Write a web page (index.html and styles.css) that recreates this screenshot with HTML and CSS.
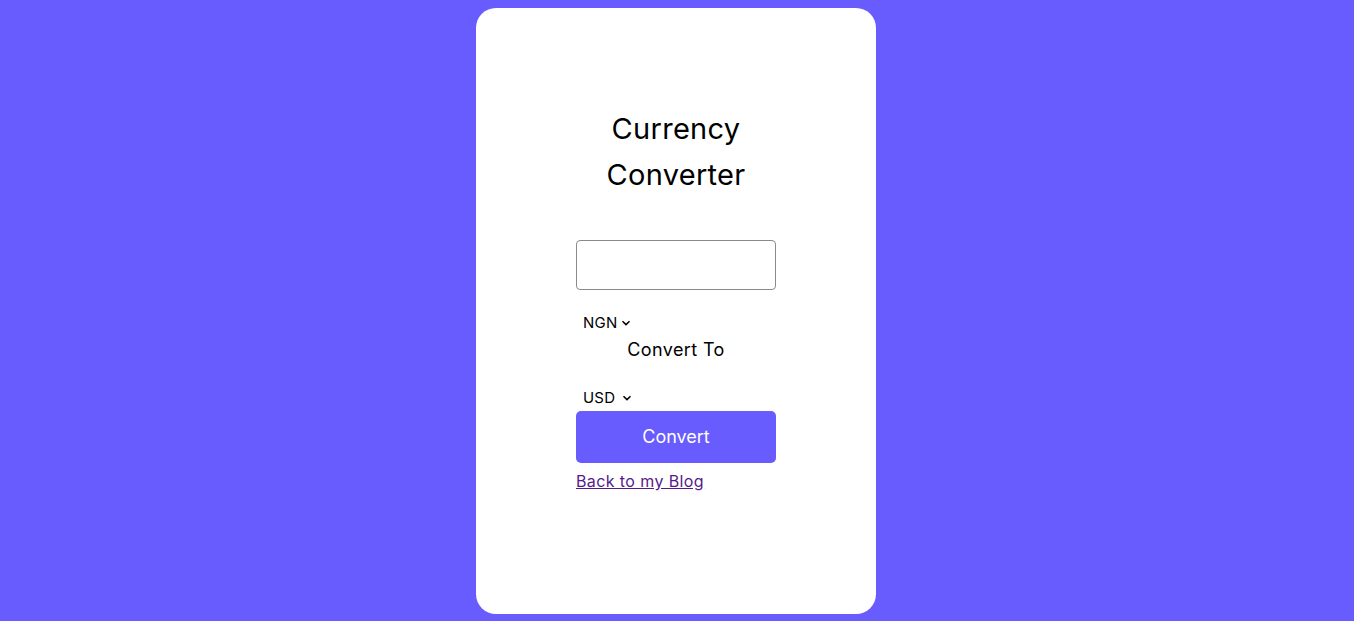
FILE: index.html
```html
<!DOCTYPE html>
<html lang="en">
<head>
<meta charset="utf-8">
<title>Currency Converter</title>
<link rel="stylesheet" href="styles.css">
</head>
<body>
<main class="card">
  <div class="content">
    <h1 class="title">Currency Converter</h1>
    <input class="amount" type="text" aria-label="Amount">
    <div class="select-wrap from">
      <span class="select-text">NGN</span>
      <svg class="chev" width="10" height="6" viewBox="0 0 10 6"><path d="M1.5 1.2 L5 4.6 L8.5 1.2" fill="none" stroke="#000" stroke-width="1.5"/></svg>
    </div>
    <p class="convert-to">Convert To</p>
    <div class="select-wrap to">
      <span class="select-text">USD</span>
      <svg class="chev" width="10" height="6" viewBox="0 0 10 6"><path d="M1.5 1.2 L5 4.6 L8.5 1.2" fill="none" stroke="#000" stroke-width="1.5"/></svg>
    </div>
    <button class="btn" type="button">Convert</button>
    <a class="link" href="#">Back to my Blog</a>
  </div>
</main>
</body>
</html>
```
FILE: styles.css
```css
html, body {
  margin: 0;
  padding: 0;
}
body {
  background: #695cfe;
  font-family: "Inter", "Noto Sans", sans-serif;
  color: #000;
  padding-top: 8px;
  min-height: 621px;
  box-sizing: border-box;
}
.card {
  width: 400px;
  height: 606px;
  margin: 0 auto;
  background: #fff;
  border-radius: 20px;
  display: flex;
  justify-content: center;
  transform: translateX(-1px);
}
.content {
  width: 200px;
  padding-top: 98px;
  display: flex;
  flex-direction: column;
}
.title {
  margin: 0;
  font-size: 29px;
  font-weight: 400;
  line-height: 46px;
  text-align: center;
  letter-spacing: 0.3px;
}
.amount {
  margin: 42px 0 0;
  width: 200px;
  height: 50px;
  box-sizing: border-box;
  border: 1px solid #8a8a8a;
  border-radius: 4px;
  font: inherit;
  padding: 0 10px;
  outline: none;
}
.select-wrap {
  display: flex;
  align-items: center;
  gap: 4px;
  padding-left: 7px;
  height: 20px;
  font-size: 15px;
  letter-spacing: 0.2px;
}
.select-wrap.from {
  margin-top: 22px;
}
.select-wrap.to {
  margin-top: 24px;
}
.select-wrap.to .chev {
  margin-left: 3px;
}
.chev {
  margin-top: 1px;
}
.convert-to {
  margin: 4px 0 0;
  font-size: 18px;
  line-height: 27px;
  text-align: center;
  letter-spacing: 0.4px;
}
.btn {
  margin-top: 4px;
  width: 200px;
  height: 52px;
  border: none;
  border-radius: 5px;
  background: #695cfe;
  color: #fff;
  font: inherit;
  font-size: 18px;
  padding: 0 0 2px;
  cursor: pointer;
}
.link {
  margin-top: 6px;
  font-size: 16px;
  line-height: 24px;
  color: #551a8b;
  text-decoration: underline;
  align-self: flex-start;
  letter-spacing: 0.4px;
}
```
